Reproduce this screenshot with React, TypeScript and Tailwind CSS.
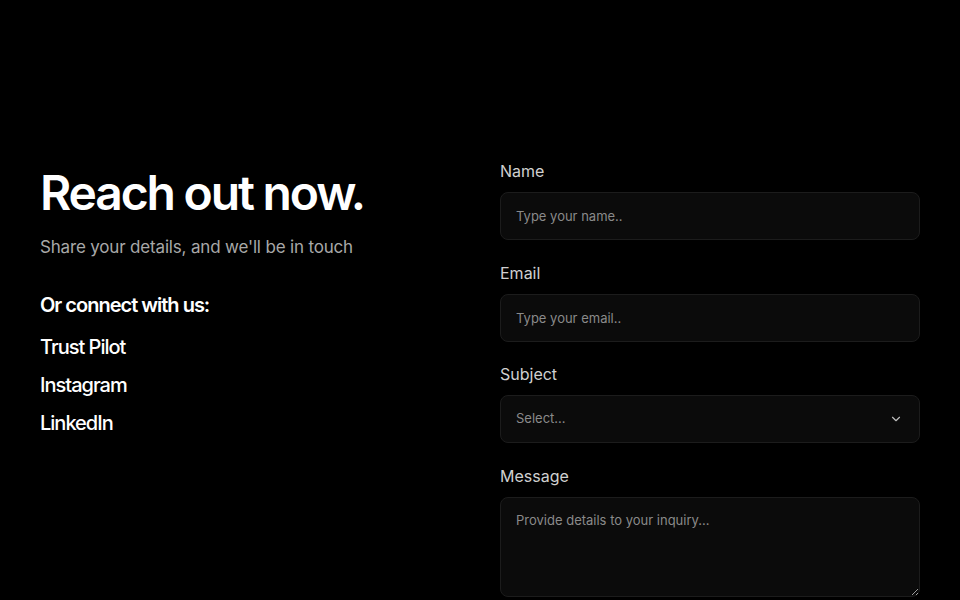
import React from "react";
import { ChevronDown } from "lucide-react";

const links = ["Trust Pilot", "Instagram", "LinkedIn"];

const fieldClass =
  "w-full h-12 rounded-lg border border-[#1c1c1c] bg-[#0b0b0b] px-[15px] text-[13px] text-[#d4d4d4] placeholder:text-[#8a8a8a] shadow-[0_1px_2px_rgba(0,0,0,0.6)] outline-none";

function Label({ children }: { children: React.ReactNode }) {
  return <label className="block h-6 mb-[9px] text-base leading-6 text-[#d0d0d0]">{children}</label>;
}

export default function App() {
  return (
    <div
      className="min-h-screen bg-black text-white"
      style={{ fontFamily: "Inter, 'Noto Sans', sans-serif" }}
    >
      <div className="grid grid-cols-2 gap-10 px-10 pt-[159px] pb-10">
        <div className="pt-[10px]">
          <h1 className="text-[48px] leading-none font-semibold tracking-[-0.045em] text-white">
            Reach out now.
          </h1>
          <p className="mt-4 text-[17px] leading-7 tracking-[-0.01em] text-[#a8a8a8]">
            Share your details, and we'll be in touch
          </p>
          <h2 className="mt-[30px] text-xl leading-7 font-semibold tracking-[-0.05em] text-white">
            Or connect with us:
          </h2>
          <ul className="mt-[14px] flex flex-col gap-[10px]">
            {links.map((l) => (
              <li key={l}>
                <a href="#" className="text-xl leading-7 font-medium tracking-[-0.05em] text-white">
                  {l}
                </a>
              </li>
            ))}
          </ul>
        </div>

        <form className="flex flex-col gap-[20.5px]">
          <div>
            <Label>Name</Label>
            <input className={fieldClass} placeholder="Type your name.." />
          </div>
          <div>
            <Label>Email</Label>
            <input className={fieldClass} placeholder="Type your email.." />
          </div>
          <div>
            <Label>Subject</Label>
            <button
              type="button"
              className={fieldClass + " flex items-center justify-between text-left"}
            >
              <span className="text-[#8a8a8a]">Select...</span>
              <ChevronDown className="mr-px h-[14px] w-[14px] text-[#bdbdbd]" strokeWidth={2} />
            </button>
          </div>
          <div>
            <Label>Message</Label>
            <textarea
              className="block w-full h-[100px] resize-y rounded-lg border border-[#1c1c1c] bg-[#0b0b0b] px-[15px] pt-[13px] text-[13px] text-[#d4d4d4] placeholder:text-[#8a8a8a] outline-none [color-scheme:dark]"
              placeholder="Provide details to your inquiry..."
            />
          </div>
        </form>
      </div>
    </div>
  );
}
